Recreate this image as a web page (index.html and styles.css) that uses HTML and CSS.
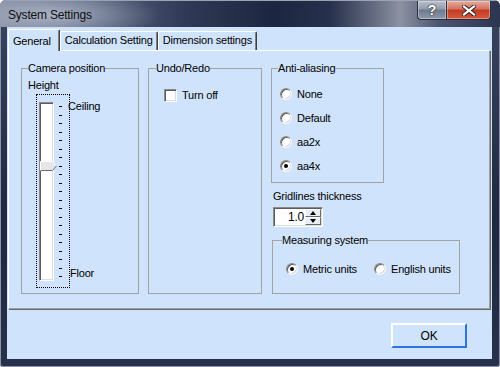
FILE: index.html
```html
<!DOCTYPE html>
<html lang="en">

<head>
	<meta charset="UTF-8">
	<title>System Settings</title>
	<link rel="stylesheet" href="styles.css">
</head>

<body>
	<div class="window">
		<div class="titlebar">
			<span class="title">System Settings</span>
			<div class="caption">
				<div class="cap help">?</div>
				<div class="cap close">
					<svg width="14" height="11" viewBox="0 0 14 11">
						<path d="M2 1.5L12 9.5M12 1.5L2 9.5" stroke="#3a2a28" stroke-width="4.2" stroke-linecap="square" />
						<path d="M2 1.5L12 9.5M12 1.5L2 9.5" stroke="#fff" stroke-width="2.2" stroke-linecap="square" />
					</svg>
				</div>
			</div>
		</div>

		<div class="client">
			<div class="tabs">
				<div class="tab active">General</div>
				<div class="tab">Calculation Setting</div>
				<div class="tab">Dimension settings</div>
			</div>

			<div class="panel">
				<fieldset class="group camera">
					<legend>Camera position</legend>
					<div class="label height">Height</div>
					<div class="slider-row">
						<div class="slider-box">
							<div class="track">
								<svg class="thumb" width="17" height="10" viewBox="0 0 17 10">
									<polygon points="0,0 12,0 16.5,4.5 12,10 0,10" fill="#e6e6e6" />
									<polyline points="0.5,9.5 0.5,0.5 12.5,0.5 16,4.5" fill="none" stroke="#fff" />
									<polyline points="0.5,9.5 12.5,9.5 16.5,4.8" fill="none" stroke="#707070" />
								</svg>
							</div>
							<div class="ticks">
								<i></i><i></i><i></i><i></i><i></i><i></i><i></i>
								<i></i><i></i><i></i><i></i><i></i><i></i><i></i>
								<i></i><i></i><i></i><i></i><i></i><i></i><i></i>
							</div>
						</div>
						<div class="slider-labels">
							<span>Ceiling</span>
							<span class="floor">Floor</span>
						</div>
					</div>
				</fieldset>

				<fieldset class="group undo">
					<legend>Undo/Redo</legend>
					<div class="check-row">
						<span class="checkbox"></span>
						<span>Turn off</span>
					</div>
				</fieldset>

				<div class="right-col">
					<fieldset class="group anti">
						<legend>Anti-aliasing</legend>
						<div class="radio-row"><span class="radio"></span><span>None</span></div>
						<div class="radio-row"><span class="radio"></span><span>Default</span></div>
						<div class="radio-row"><span class="radio"></span><span>aa2x</span></div>
						<div class="radio-row"><span class="radio checked"></span><span>aa4x</span></div>
					</fieldset>

					<div class="label grid-label">Gridlines thickness</div>
					<div class="spin">
						<span class="spin-value">1.0</span>
						<div class="spin-buttons">
							<div class="spin-btn"><span class="arrow up"></span></div>
							<div class="spin-btn"><span class="arrow down"></span></div>
						</div>
					</div>

					<fieldset class="group measure">
						<legend>Measuring system</legend>
						<div class="measure-row">
							<div class="radio-row metric"><span class="radio checked"></span><span>Metric units</span></div>
							<div class="radio-row"><span class="radio"></span><span>English units</span></div>
						</div>
					</fieldset>
				</div>
			</div>

			<div class="footer">
				<div class="ok">OK</div>
			</div>
		</div>
	</div>
</body>

</html>
```

FILE: styles.css
```css
* {
	box-sizing: border-box;
}

body {
	margin: 0;
	background: #fff;
	font-family: "Liberation Sans", Arial, sans-serif;
	font-size: 11px;
	letter-spacing: -0.2px;
	color: #000;
}

.window {
	width: 500px;
	height: 367px;
	display: flex;
	flex-direction: column;
	background: linear-gradient(to bottom, #3a4560, #1f2841 60%, #28314b);
	border-radius: 6px 6px 3px 3px;
	overflow: hidden;
	box-shadow: inset 0 0 0 1px #8c94a6;
}

.titlebar {
	height: 27px;
	flex: none;
	display: flex;
	justify-content: space-between;
	padding: 0 9px 0 8px;
	border-top: 1px solid #9aa2b3;
	background:
		radial-gradient(ellipse 110px 26px at 50px 14px, rgba(190, 198, 214, .75), rgba(190, 198, 214, 0)),
		linear-gradient(to right, #7d869c 0%, #5c6782 16%, #2e3854 38%, #1d2640 55%, #27304c 66%, #6d7488 76%, #8c92a2 80%, #4a5470 88%, #2c3550 100%);
}

.title {
	font-size: 12px;
	line-height: 14px;
	padding-top: 7px;
	color: #101010;
}

.caption {
	display: flex;
	align-items: flex-start;
}

.cap {
	height: 19px;
	display: flex;
	align-items: center;
	justify-content: center;
	border: 1px solid #2a2f3c;
	border-top: none;
	box-shadow: inset 0 0 0 1px rgba(255, 255, 255, .35);
}

.help {
	width: 29px;
	border-right: none;
	border-radius: 0 0 0 4px;
	background: linear-gradient(to bottom, #b9c0cc, #939cae 45%, #6f798d 50%, #8e98ab);
	color: #fff;
	font-weight: bold;
	font-size: 14px;
	text-shadow: 0 0 2px #222, 0 0 1px #222;
}

.close {
	width: 45px;
	border-radius: 0 0 4px 0;
	background: linear-gradient(to bottom, #e9aa9a, #d27260 45%, #c13a22 50%, #d5593e);
}

.client {
	flex: 1;
	margin: 0 8px 8px 7px;
	padding: 0 2px 0 1px;
	background: #d0e3fc;
	display: flex;
	flex-direction: column;
}

.tabs {
	height: 23px;
	flex: none;
	display: flex;
	align-items: flex-end;
	padding-top: 2px;
}

.tab {
	height: 19px;
	padding: 0 4px 0 4px;
	line-height: 16px;
	white-space: nowrap;
	border-top: 1px solid #fff;
	border-left: 1px solid #fff;
	border-right: 1px solid #404040;
	box-shadow: inset -1px 0 #808080;
	border-radius: 2px 2px 0 0;
}

.tab.active {
	height: 22px;
	margin-bottom: -1px;
	padding: 2px 8px 0 4px;
	line-height: 18px;
	background: #d0e3fc;
	position: relative;
	z-index: 1;
}

.panel {
	flex: 1;
	display: flex;
	gap: 9px;
	padding: 11px 0 14px 12px;
	border-top: 1px solid #fff;
	border-left: 1px solid #fff;
	border-right: 1px solid #a0a0a0;
	border-bottom: 1px solid #a0a0a0;
	box-shadow: 1px 1px 0 #6a6a6a;
}

.group {
	margin: 0;
	padding: 0;
	min-width: 0;
	border: 1px solid #a3a3a3;
}

.group legend {
	padding: 0;
	line-height: 13px;
}

.label {
	line-height: 13px;
}

/* camera position */
.camera {
	width: 118px;
	padding-left: 6px;
}

.height {
	margin-top: 4px;
}

.slider-row {
	display: flex;
	margin: 2px 0 0 8px;
}

.slider-box {
	width: 34px;
	height: 194px;
	border: 1px dotted #000;
	padding: 7px 0 6px 2px;
	display: flex;
}

.track {
	width: 15px;
	height: 179px;
	position: relative;
	background: #fff;
	border: 1px solid;
	border-color: #8a8a8a #fff #fff #8a8a8a;
	box-shadow: inset 1px 1px #5c5c5c, inset -1px -1px #dcdcdc;
}

.thumb {
	position: absolute;
	top: 58px;
	left: 0;
}

.ticks {
	width: 3px;
	margin-left: 5px;
	padding: 4px 0;
	display: flex;
	flex-direction: column;
	justify-content: space-between;
}

.ticks i {
	display: block;
	height: 1px;
	background: #000;
}

.slider-labels {
	display: flex;
	flex-direction: column;
	justify-content: space-between;
	margin-left: -2px;
	padding: 6px 0 8px;
	line-height: 13px;
}

.floor {
	margin-left: 2px;
}

/* undo */
.undo {
	width: 114px;
	padding-left: 15px;
}

.undo legend {
	margin-left: -8px;
}

.check-row {
	display: flex;
	align-items: center;
	gap: 5px;
	margin-top: 14px;
	line-height: 13px;
}

.checkbox {
	width: 13px;
	height: 13px;
	background: #fff;
	border: 1px solid;
	border-color: #8a8a8a #fff #fff #8a8a8a;
	box-shadow: inset 1px 1px #5c5c5c, inset -1px -1px #dcdcdc;
}

/* right column */
.right-col {
	width: 189px;
	display: flex;
	flex-direction: column;
}

.anti {
	width: 113px;
	padding: 7px 0 4px 8px;
}

.anti legend {
	margin-left: -2px;
}

.radio-row {
	height: 24px;
	display: flex;
	align-items: center;
	gap: 5px;
}

.radio {
	width: 12px;
	height: 12px;
	border-radius: 50%;
	background: #fff;
	border: 1px solid;
	border-color: #8a8a8a #f4f4f4 #f4f4f4 #8a8a8a;
	box-shadow: inset 1px 1px #5c5c5c, inset -1px -1px #dcdcdc;
	display: flex;
	align-items: center;
	justify-content: center;
}

.radio.checked::after {
	content: "";
	width: 4px;
	height: 4px;
	border-radius: 50%;
	background: #000;
}

.grid-label {
	margin: 7px 0 0 2px;
}

.spin {
	width: 50px;
	height: 20px;
	margin: 4px 0 0 2px;
	display: flex;
	background: #fff;
	border: 1px solid;
	border-color: #8a8a8a #fff #fff #8a8a8a;
	box-shadow: inset 1px 1px #5c5c5c, inset -1px -1px #dcdcdc;
	padding: 1px;
}

.spin-value {
	flex: 1;
	text-align: right;
	padding-right: 1px;
	line-height: 16px;
	font-size: 12px;
}

.spin-buttons {
	width: 16px;
	display: flex;
	flex-direction: column;
}

.spin-btn {
	flex: 1;
	display: flex;
	align-items: center;
	justify-content: center;
	background: #e9eef7;
	border: 1px solid;
	border-color: #fff #6a6a6a #6a6a6a #fff;
}

.arrow {
	width: 0;
	height: 0;
	border-left: 3.5px solid transparent;
	border-right: 3.5px solid transparent;
}

.arrow.up {
	border-bottom: 4px solid #000;
}

.arrow.down {
	border-top: 4px solid #000;
}

.measure {
	flex: 1;
	width: 188px;
	margin: 7px 0 0 1px;
	padding: 15px 0 0 13px;
}

.measure legend {
	margin-left: -4px;
}

.measure-row {
	display: flex;
}

.measure .radio-row {
	height: 14px;
}

.metric {
	width: 88px;
}

.footer {
	height: 50px;
	flex: none;
	display: flex;
	justify-content: flex-end;
	align-items: flex-start;
	padding: 14px 23px 0 0;
}

.ok {
	width: 76px;
	height: 25px;
	display: flex;
	align-items: center;
	justify-content: center;
	border: 2px solid;
	border-color: #fff #2f74dc #2f74dc #fff;
	font-size: 12px;
}
```
